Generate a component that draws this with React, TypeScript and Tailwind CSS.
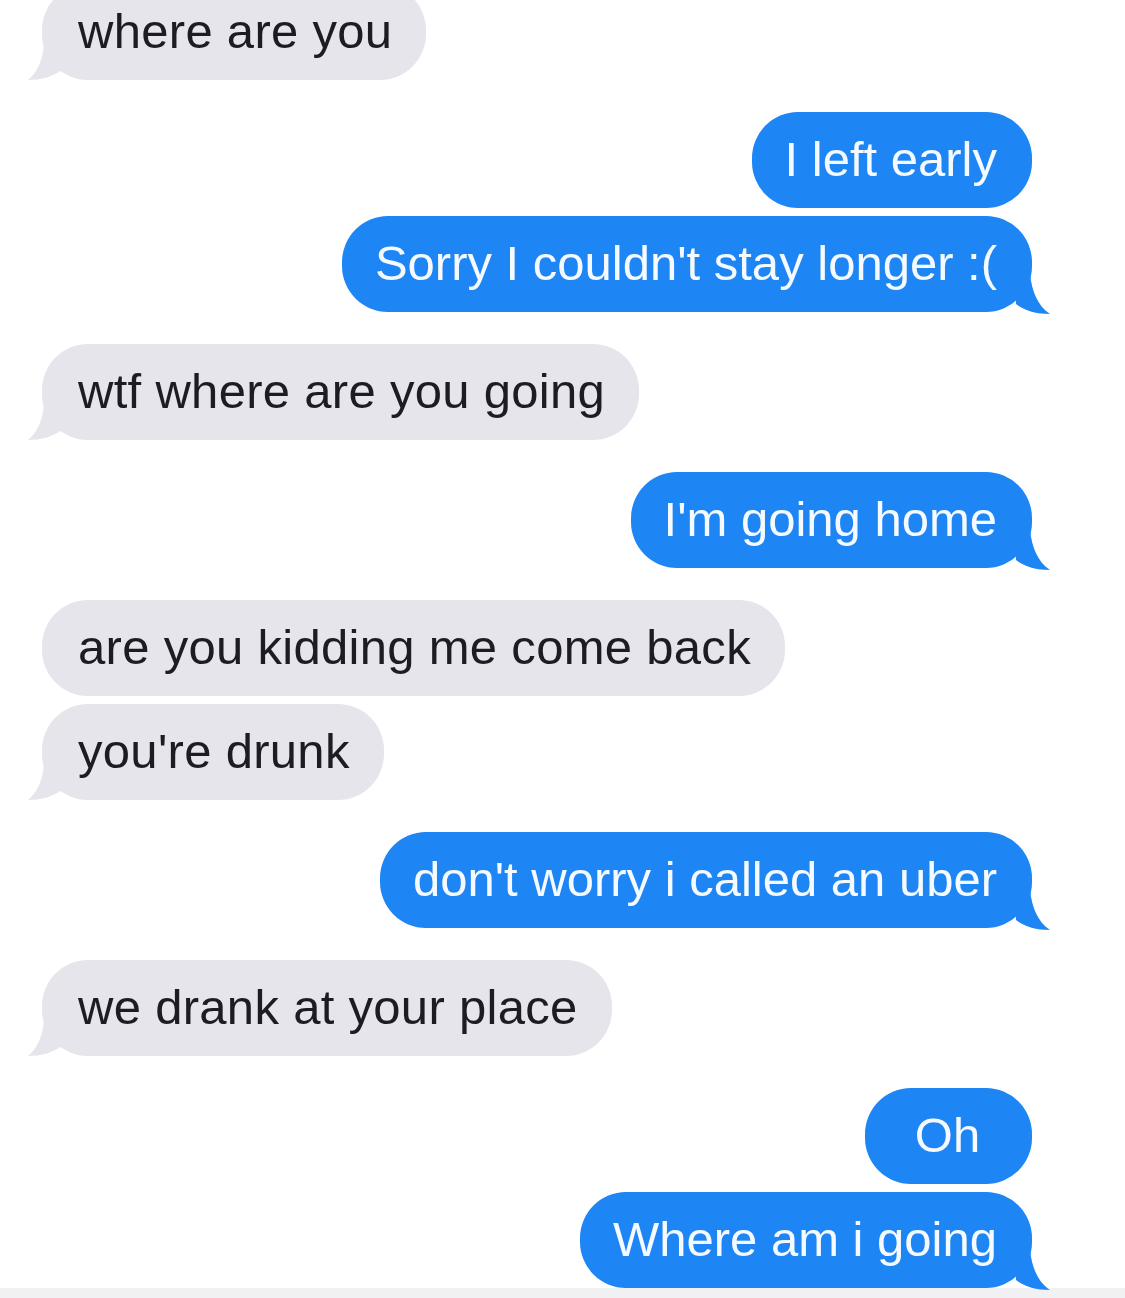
const messages = [
  { from: "them", text: "where are you", tail: true },
  { from: "me", text: "I left early", tail: false },
  { from: "me", text: "Sorry I couldn't stay longer :(", tail: true },
  { from: "them", text: "wtf where are you going", tail: true },
  { from: "me", text: "I'm going home", tail: true },
  { from: "them", text: "are you kidding me come back", tail: false },
  { from: "them", text: "you're drunk", tail: true },
  { from: "me", text: "don't worry i called an uber", tail: true },
  { from: "them", text: "we drank at your place", tail: true },
  { from: "me", text: "Oh", tail: false },
  { from: "me", text: "Where am i going", tail: true },
];

function Tail({ side }: { side: "left" | "right" }) {
  if (side === "left") {
    return (
      <svg
        className="absolute -left-[14px] bottom-0"
        width="40"
        height="40"
        viewBox="0 0 40 40"
      >
        <path d="M16 0 C16 18 10 32 0 40 C12 40 24 37 34 30 L34 0 Z" fill="#e6e5eb" />
      </svg>
    );
  }
  return (
    <svg
      className="absolute -right-[18px] bottom-[-2px]"
      width="40"
      height="40"
      viewBox="0 0 40 40"
    >
      <path d="M20 0 C22 18 28 32 40 40 C27 40 15 37 6 30 L6 0 Z" fill="#1e85f4" />
    </svg>
  );
}

function Bubble({ from, text, tail }: { from: string; text: string; tail: boolean }) {
  const mine = from === "me";
  return (
    <div className={mine ? "flex justify-end" : "flex justify-start"}>
      <div
        className={
          mine
            ? "relative flex h-[96px] min-w-[167px] items-center justify-center rounded-[46px] bg-[#1e85f4] pl-[33px] pr-[35px] text-[49px] text-[#f4faff]"
            : "relative flex h-[96px] items-center rounded-[46px] bg-[#e6e5eb] pl-[36px] pr-[34px] text-[49px] tracking-[0.3px] text-[#1c1c22]"
        }
      >
        {tail && <Tail side={mine ? "right" : "left"} />}
        <span className="relative">{text}</span>
      </div>
    </div>
  );
}

export default function App() {
  const groups: { from: string; text: string; tail: boolean }[][] = [];
  messages.forEach((m) => {
    const last = groups[groups.length - 1];
    if (last && last[0].from === m.from) last.push(m);
    else groups.push([m]);
  });

  return (
    <div
      className="flex h-[1298px] w-[1125px] flex-col overflow-hidden bg-white"
      style={{ fontFamily: '"Liberation Sans", Arial, sans-serif' }}
    >
      <div className="-mt-[16px] flex flex-col gap-[32px] pl-[42px] pr-[93px]">
        {groups.map((g, i) => (
          <div key={i} className="flex flex-col gap-[8px]">
            {g.map((m, j) => (
              <Bubble key={j} from={m.from} text={m.text} tail={m.tail} />
            ))}
          </div>
        ))}
      </div>
      <div className="mt-auto h-[12px] bg-[#f1f1f3]" />
    </div>
  );
}
